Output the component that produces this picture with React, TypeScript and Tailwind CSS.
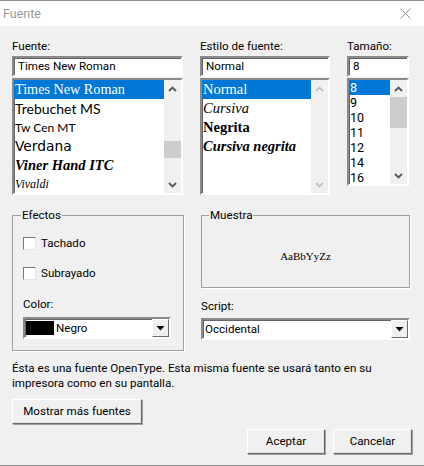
import type { ReactNode } from "react";

const sunken =
  "border-2 border-t-[#8a8a8a] border-l-[#8a8a8a] border-r-white border-b-white shadow-[inset_1px_1px_0_#646464]";

const fontRows = [
  { label: "Trebuchet MS", cls: "font-['Lato'] text-[14px]" },
  { label: "Tw Cen MT", cls: "font-['Lato'] text-[12px]" },
  { label: "Verdana", cls: "font-['DejaVu_Sans'] text-[13.8px]" },
  { label: "Viner Hand ITC", cls: "font-['Liberation_Serif'] italic font-bold text-[14.5px]" },
  { label: "Vivaldi", cls: "font-['Liberation_Serif'] italic text-[12px]" },
];

const styleRows = [
  { label: "Cursiva", cls: "italic" },
  { label: "Negrita", cls: "font-bold" },
  { label: "Cursiva negrita", cls: "italic font-bold" },
];

const sizes = ["9", "10", "11", "12", "14", "16"];

function Chevron({ up, light }: { up?: boolean; light?: boolean }) {
  return (
    <svg width="9" height="6" viewBox="0 0 9 6" fill="none">
      <path
        d={up ? "M1 5 L4.5 1.5 L8 5" : "M1 1 L4.5 4.5 L8 1"}
        stroke={light ? "#bfc3c5" : "#505a5a"}
        strokeWidth="1.8"
      />
    </svg>
  );
}

function Scrollbar({ disabled, thumbTop, thumbH }: { disabled?: boolean; thumbTop?: number; thumbH?: number }) {
  return (
    <div className="w-[17px] shrink-0 bg-[#f0f0f0] flex flex-col">
      <div className="h-[17px] shrink-0 flex items-center justify-center">
        <Chevron up light={disabled} />
      </div>
      <div className="flex-1 min-h-0">
        {thumbH ? (
          <div className="bg-[#cdcdcd]" style={{ marginTop: thumbTop, height: thumbH }} />
        ) : null}
      </div>
      <div className="h-[17px] shrink-0 flex items-center justify-center">
        <Chevron light={disabled} />
      </div>
    </div>
  );
}

function Dropdown({ children, className }: { children: ReactNode; className: string }) {
  return (
    <div className={`${sunken} ${className} h-[22px] bg-white flex items-center`}>
      <div className="flex-1 min-w-0 flex items-center">{children}</div>
      <div className="w-[17px] h-[18px] bg-[#f0f0f0] border border-[#fff] border-r-[#696969] border-b-[#696969] flex items-center justify-center">
        <svg width="9" height="5" viewBox="0 0 9 5">
          <path d="M0.5 0 H8.5 L4.5 4.5 Z" fill="#000" />
        </svg>
      </div>
    </div>
  );
}

function Check({ label, className }: { label: string; className: string }) {
  return (
    <div className={`flex items-center ${className}`}>
      <div className="w-[13px] h-[13px] bg-white border border-[#7a7a7a] border-r-[#e3e3e3] border-b-[#e3e3e3]" />
      <span className="ml-[5px]">{label}</span>
    </div>
  );
}

function DialogButton({ children, className }: { children: ReactNode; className: string }) {
  return (
    <button
      className={`${className} h-[25px] bg-[#f0f0f0] border border-white border-r-[#696969] border-b-[#696969] shadow-[1px_1px_0_#a0a0a0,inset_-1px_-1px_0_#e3e3e3] flex items-center justify-center`}
    >
      {children}
    </button>
  );
}

export default function App() {
  return (
    <div className="w-[424px] h-[466px] overflow-hidden bg-[#f0f0f0] flex flex-col text-[11.6px] leading-[15px] text-black font-['Roboto',sans-serif]">
      {/* Title bar */}
      <div className="h-[26px] shrink-0 bg-white border-t border-[#8e8e8e] flex items-center justify-between pl-[3px] pr-[13px]">
        <span className="text-[#9a9a9a] text-[12.5px]">Fuente</span>
        <svg width="11" height="11" viewBox="0 0 11 11" fill="none">
          <path d="M0.5 0.5 L10.5 10.5 M10.5 0.5 L0.5 10.5" stroke="#8c8c8c" strokeWidth="1" />
        </svg>
      </div>

      {/* Pickers */}
      <div className="flex gap-[17px] pl-[12px] pt-[13px] shrink-0 h-[169px]">
        <div className="w-[171px] shrink-0">
          <div className="h-[17px]">Fuente:</div>
          <div className={`${sunken} h-[21px] bg-white flex items-center pl-[4px]`}>Times New Roman</div>
          <div className={`${sunken} h-[117px] mt-[1px] bg-white flex`}>
            <div className="flex-1 min-w-0 overflow-hidden">
              <div className="h-[19px] bg-[#0078d7] text-white flex items-center font-['Liberation_Serif',serif] text-[14.2px] pl-[1px]">
                Times New Roman
              </div>
              {fontRows.map((r) => (
                <div key={r.label} className={`h-[19px] flex items-center pl-[1px] ${r.cls}`}>
                  {r.label}
                </div>
              ))}
            </div>
            <Scrollbar thumbTop={44} thumbH={17} />
          </div>
        </div>

        <div className="w-[130px] shrink-0">
          <div className="h-[17px]">Estilo de fuente:</div>
          <div className={`${sunken} h-[21px] bg-white flex items-center pl-[4px]`}>Normal</div>
          <div className={`${sunken} h-[117px] mt-[1px] bg-white flex`}>
            <div className="flex-1 min-w-0 font-['Liberation_Serif',serif] text-[14.5px]">
              <div className="h-[19px] bg-[#0078d7] text-white flex items-center pl-[1px]">Normal</div>
              {styleRows.map((r) => (
                <div key={r.label} className={`h-[19px] flex items-center pl-[1px] ${r.cls}`}>
                  {r.label}
                </div>
              ))}
            </div>
            <Scrollbar disabled />
          </div>
        </div>

        <div className="w-[62px] shrink-0">
          <div className="h-[17px]">Tamaño:</div>
          <div className={`${sunken} h-[21px] bg-white flex items-center pl-[4px]`}>8</div>
          <div className={`${sunken} h-[108px] mt-[1px] bg-white flex`}>
            <div className="flex-1 min-w-0 text-[12.5px] leading-[14px]">
              <div className="h-[15px] bg-[#0078d7] text-white flex items-center pl-[1px]">8</div>
              {sizes.map((s) => (
                <div key={s} className="h-[15px] flex items-center pl-[1px]">
                  {s}
                </div>
              ))}
            </div>
            <Scrollbar thumbTop={0} thumbH={31} />
          </div>
        </div>
      </div>

      {/* Effects and sample */}
      <div className="flex gap-[17px] pl-[12px] pt-[13px] shrink-0">
        <fieldset className="w-[172px] h-[143px] border border-[#a0a0a0] shadow-[1px_1px_0_#fff] pl-[10px] shrink-0">
          <legend className="ml-[-2px] px-[1px] h-[15px]">Efectos</legend>
          <Check label="Tachado" className="mt-[13px]" />
          <Check label="Subrayado" className="mt-[15px]" />
          <div className="mt-[16px]">Color:</div>
          <Dropdown className="w-[148px] mt-[5px]">
            <div className="w-[28px] h-[14px] bg-black ml-[1px] mr-[2px]" />
            <span>Negro</span>
          </Dropdown>
        </fieldset>
        <div className="w-[209px] shrink-0">
          <fieldset className="h-[80px] border border-[#a0a0a0] shadow-[1px_1px_0_#fff]">
            <legend className="ml-[7px] px-[1px] h-[15px]">Muestra</legend>
            <div className="h-[64px] pt-[2px] flex items-center justify-center font-['Liberation_Serif',serif] text-[11px]">
              AaBbYyZz
            </div>
          </fieldset>
          <div className="mt-[11px] h-[19px]">Script:</div>
          <Dropdown className="w-[209px]">
            <span className="pl-[2px]">Occidental</span>
          </Dropdown>
        </div>
      </div>

      {/* Description */}
      <div className="pl-[12px] pr-[12px] pt-[10px] shrink-0">
        <p>Ésta es una fuente OpenType. Esta misma fuente se usará tanto en su</p>
        <p>impresora como en su pantalla.</p>
      </div>

      <div className="pl-[12px] pt-[8px] shrink-0">
        <DialogButton className="w-[130px]">Mostrar más fuentes</DialogButton>
      </div>

      <div className="flex justify-end gap-[8px] pr-[12px] pt-[5px] shrink-0">
        <DialogButton className="w-[78px]">Aceptar</DialogButton>
        <DialogButton className="w-[79px]">Cancelar</DialogButton>
      </div>

      <div className="mt-auto h-[1px] bg-[#8e8e8e] shrink-0" />
    </div>
  );
}
